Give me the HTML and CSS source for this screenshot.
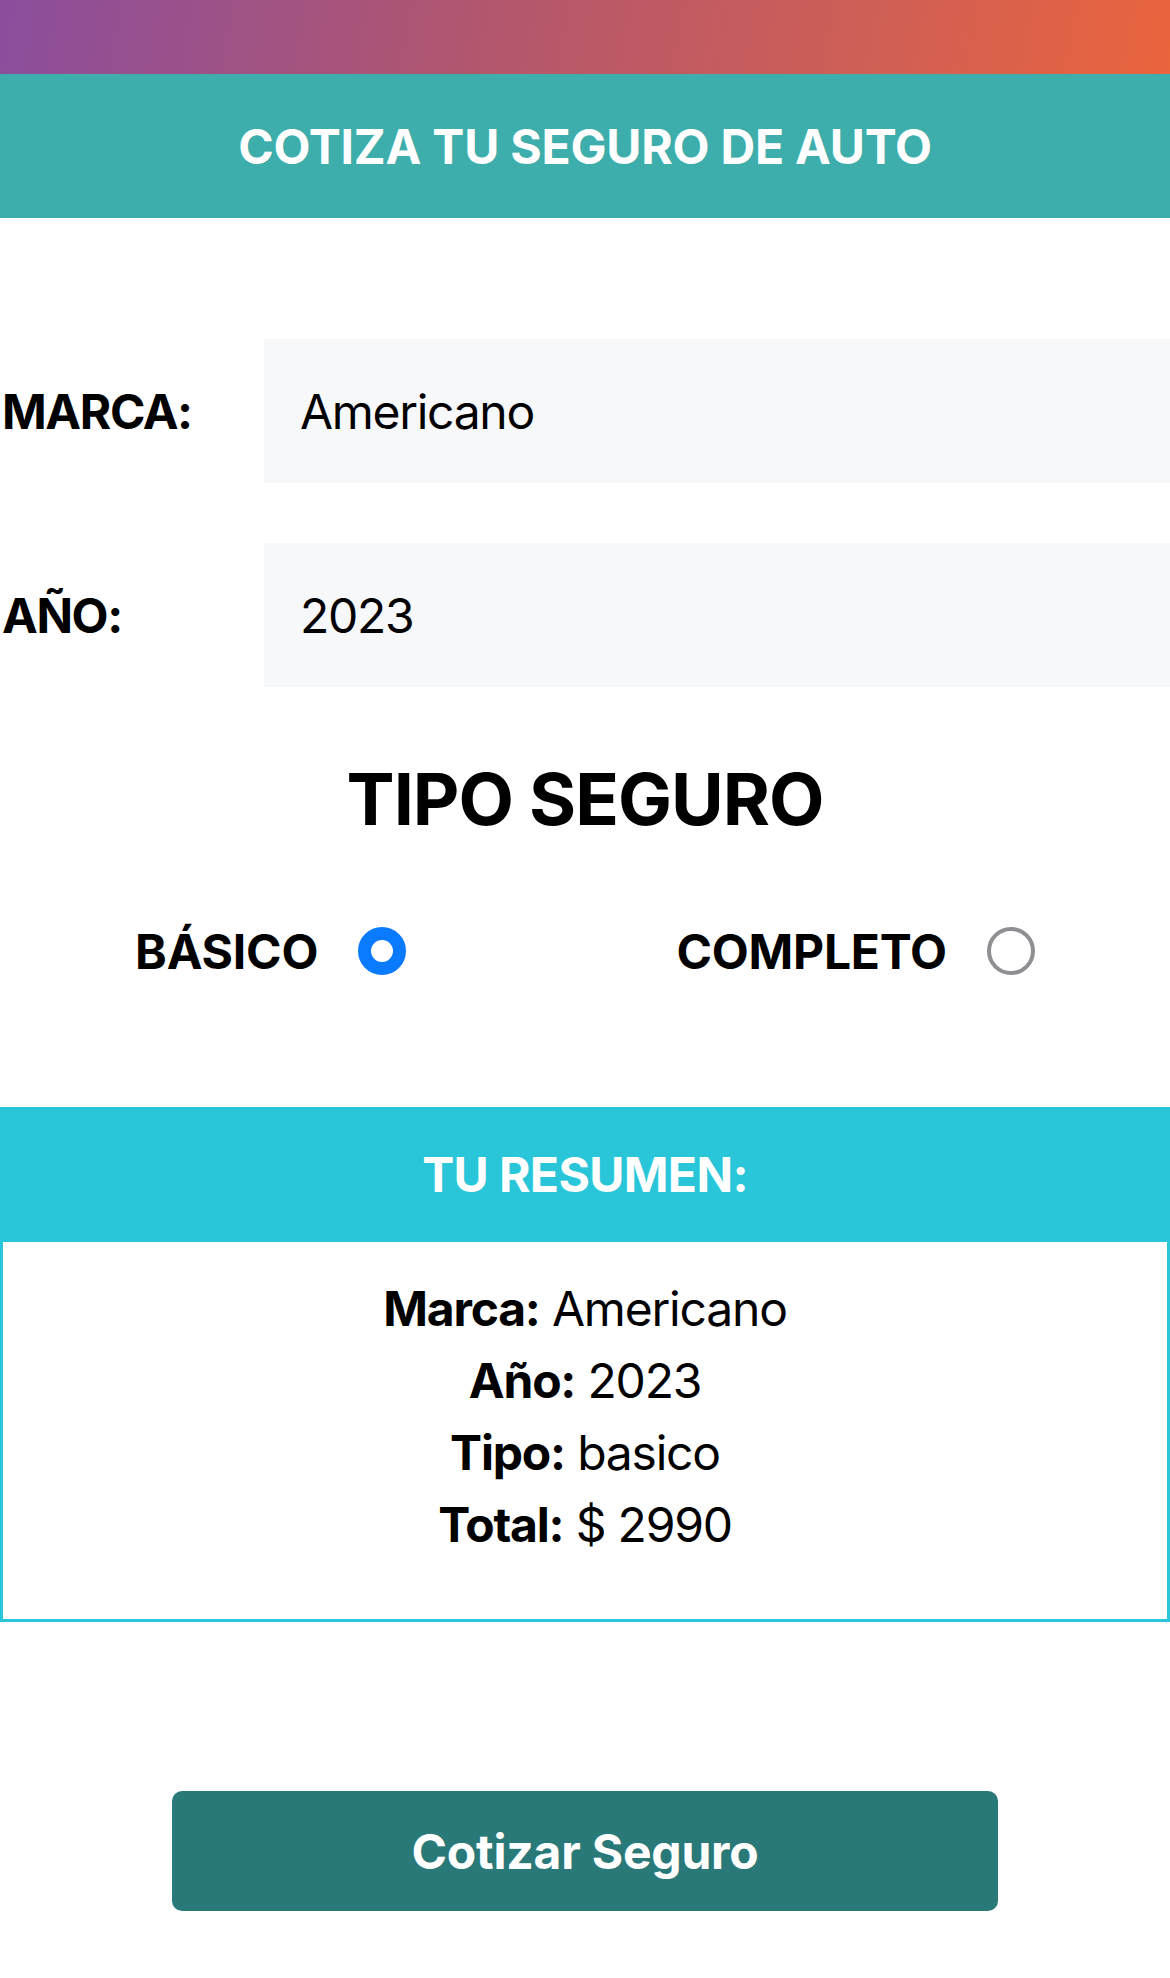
FILE: index.html
```html
<!DOCTYPE html>
<html lang="es">
<head>
<meta charset="utf-8">
<title>Cotiza tu seguro de auto</title>
<link rel="stylesheet" href="styles.css">
</head>
<body>
<div class="topbar"></div>
<header class="header">
  <h1 class="header-title">COTIZA TU SEGURO DE AUTO</h1>
</header>
<main class="form">
  <div class="field">
    <label class="field-label">MARCA:</label>
    <div class="field-input">Americano</div>
  </div>
  <div class="field field-second">
    <label class="field-label">AÑO:</label>
    <div class="field-input">2023</div>
  </div>
  <h2 class="tipo-title">TIPO SEGURO</h2>
  <div class="radio-row">
    <div class="radio-group">
      <span class="radio-label">BÁSICO</span>
      <span class="radio radio-checked"></span>
    </div>
    <div class="radio-group">
      <span class="radio-label">COMPLETO</span>
      <span class="radio"></span>
    </div>
  </div>
  <section class="summary">
    <div class="summary-header">TU RESUMEN:</div>
    <div class="summary-body">
      <p class="summary-line"><b>Marca:</b> Americano</p>
      <p class="summary-line"><b>Año:</b> 2023</p>
      <p class="summary-line"><b>Tipo:</b> basico</p>
      <p class="summary-line"><b>Total:</b> $ 2990</p>
    </div>
  </section>
  <div class="actions">
    <button class="btn">Cotizar Seguro</button>
  </div>
</main>
</body>
</html>
```
FILE: styles.css
```css
* { box-sizing: border-box; }
html, body {
  margin: 0;
  padding: 0;
  background: #ffffff;
  font-family: Inter, "Noto Sans", "Liberation Sans", sans-serif;
  color: #000;
}
.topbar {
  height: 74px;
  background: linear-gradient(100deg, #8b4e9d 0%, #b1566f 40%, #d05f55 75%, #ea643d 100%);
}
.header {
  height: 144px;
  background: #3daeab;
  display: flex;
  align-items: center;
  justify-content: center;
}
.header-title {
  margin: 0;
  color: #fff;
  font-size: 48px;
  font-weight: 700;
  letter-spacing: -0.2px;
}
.form {
  padding-top: 121px;
}
.field {
  display: flex;
  align-items: center;
  height: 144px;
}
.field-second {
  margin-top: 60px;
}
.field-label {
  width: 264px;
  font-size: 48px;
  font-weight: 700;
  padding-left: 2px;
  letter-spacing: -1.4px;
}
.field-input {
  flex: 1;
  height: 144px;
  display: flex;
  align-items: center;
  background: #f7f8fa;
  padding-left: 36px;
  font-size: 48px;
  font-weight: 400;
  letter-spacing: -1.3px;
}
.tipo-title {
  margin: 68px 0 0;
  text-align: center;
  font-size: 72px;
  line-height: 88px;
  font-weight: 700;
  letter-spacing: -1px;
}
.radio-row {
  margin-top: 79px;
  display: flex;
  justify-content: space-around;
  align-items: center;
  height: 58px;
}
.radio-group {
  display: flex;
  align-items: center;
  gap: 40px;
}
.radio-label {
  font-size: 48px;
  font-weight: 700;
  letter-spacing: -0.2px;
}
.radio {
  width: 48px;
  height: 48px;
  border-radius: 50%;
  border: 4px solid #8e8e93;
  background: #fff;
}
.radio-checked {
  border: 13px solid #0a7aff;
}
.summary {
  margin-top: 127px;
  border: 3px solid #2ac6da;
}
.summary-header {
  height: 135px;
  margin: -3px -3px 0;
  background: #29c6da;
  color: #fff;
  display: flex;
  align-items: center;
  justify-content: center;
  font-size: 48px;
  font-weight: 700;
  letter-spacing: -0.6px;
}
.summary-body {
  padding: 31px 0 58px;
  text-align: center;
}
.summary-line {
  margin: 0;
  font-size: 48px;
  line-height: 72px;
  letter-spacing: -1.2px;
}
.summary-line b {
  font-weight: 700;
}
.actions {
  display: flex;
  justify-content: center;
  padding: 169px 0 67px;
}
.btn {
  width: 826px;
  height: 120px;
  border: none;
  border-radius: 10px;
  background: #2a7979;
  color: #fff;
  font-family: Inter, "Noto Sans", "Liberation Sans", sans-serif;
  font-size: 48px;
  font-weight: 700;
  letter-spacing: -0.2px;
}
```
